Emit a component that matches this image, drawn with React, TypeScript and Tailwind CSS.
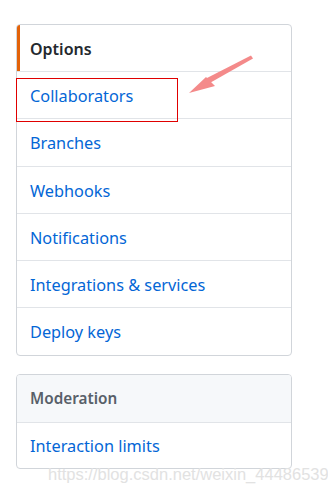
import React from "react";

const items = [
  "Collaborators",
  "Branches",
  "Webhooks",
  "Notifications",
  "Integrations & services",
  "Deploy keys",
];

export default function App() {
  return (
    <div
      className="relative w-[328px] h-[491px] bg-white overflow-hidden"
      style={{ fontFamily: '"Noto Sans", "Open Sans", sans-serif' }}
    >
      <div className="pt-[24px] pl-[16px]">
        <div className="w-[276px] border border-[#d1d5da] rounded-[4px] overflow-hidden">
          <div className="relative h-[46px] flex items-center pl-[13px] pt-[1px] text-[16px] font-semibold text-[#24292e]">
            <div className="absolute left-0 top-0 bottom-0 w-[3px] bg-[#e36209]" />
            Options
          </div>
          {items.map((it) => (
            <div
              key={it}
              className="h-[47.3px] border-t border-[#e1e4e8] flex items-center pl-[13px] pt-[2px] text-[16.3px] text-[#0366d6]"
            >
              {it}
            </div>
          ))}
        </div>
        <div className="mt-[18px] w-[276px] border border-[#d1d5da] rounded-[4px] overflow-hidden">
          <div className="h-[47px] bg-[#f6f8fa] flex items-center pl-[13px] pt-[1px] text-[15.3px] font-semibold text-[#586069]">
            Moderation
          </div>
          <div className="h-[46px] border-t border-[#e1e4e8] flex items-center pl-[13px] pt-[1px] text-[16.3px] text-[#0366d6]">
            Interaction limits
          </div>
        </div>
      </div>

      {/* red highlight box */}
      <div className="absolute left-[16px] top-[78px] w-[162px] h-[44px] border border-[#e00000]" />

      {/* arrow */}
      <svg className="absolute left-0 top-0" width="328" height="491" viewBox="0 0 328 491">
        <polygon points="251,55.5 253,58.5 208,84 205,79" fill="#f48a8a" />
        <polygon points="189,93 206,77 215,86" fill="#f48a8a" />
      </svg>

      {/* watermark */}
      <div
        className="absolute left-[48px] top-[465px] text-[16.5px] leading-[18px] text-[#e2e2e2] whitespace-nowrap"
        style={{ fontFamily: '"Liberation Sans", Arial, sans-serif' }}
      >
        https://blog.csdn.net/weixin_44486539
      </div>
    </div>
  );
}
